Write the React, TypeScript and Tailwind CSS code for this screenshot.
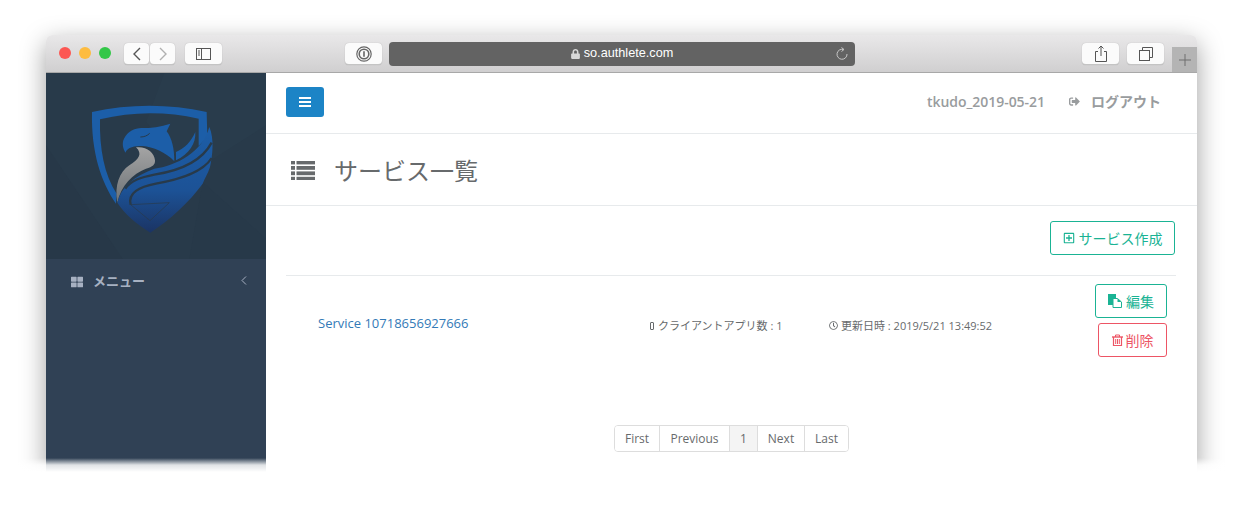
import React from 'react'
import { FaThLarge, FaSignOutAlt, FaRegPlusSquare, FaRegClock, FaLock } from 'react-icons/fa'

const font = "font-['Open_Sans','Noto_Sans_CJK_JP',sans-serif]"

function ToolButton({ className = '', children }: { className?: string; children: React.ReactNode }) {
  return (
    <div className={`h-[22px] rounded-[4px] bg-[#fbfbfb] border-b border-[#c4c4c4] shadow-[0_0_1px_rgba(0,0,0,0.25)] flex items-center justify-center ${className}`}>
      {children}
    </div>
  )
}

function TitleBar() {
  return (
    <div className="h-[38px] shrink-0 flex bg-gradient-to-b from-[#e9e8e9] to-[#d0cfd0] border-b border-[#a8a8a8] pl-[13px]">
      <div className="flex items-center gap-[8px] h-[37px] mt-[-1px]">
        <span className="w-[12px] h-[12px] rounded-full bg-[#fc5753]" />
        <span className="w-[12px] h-[12px] rounded-full bg-[#fdbc40]" />
        <span className="w-[12px] h-[12px] rounded-full bg-[#33c748]" />
      </div>
      <div className="flex items-start pt-[8px] ml-[13px]">
        <ToolButton className="w-[25px] mr-[1px]">
          <svg width="10" height="14" viewBox="0 0 10 14" fill="none" stroke="#555" strokeWidth="1.4"><path d="M8 1L2 7l6 6" /></svg>
        </ToolButton>
        <ToolButton className="w-[25px]">
          <svg width="10" height="14" viewBox="0 0 10 14" fill="none" stroke="#b0b0b0" strokeWidth="1.4"><path d="M2 1l6 6-6 6" /></svg>
        </ToolButton>
        <ToolButton className="w-[37px] ml-[10px]">
          <svg width="16" height="12" viewBox="0 0 16 12" fill="none" stroke="#555"><rect x="0.5" y="0.5" width="14" height="11" /><path d="M5.5 0.5v11M2 3h2M2 5h2M2 7h2" /></svg>
        </ToolButton>
        <ToolButton className="w-[37px] ml-[123px]">
          <svg width="16" height="16" viewBox="0 0 16 16" fill="none" stroke="#666"><circle cx="8" cy="8" r="7.2" strokeWidth="1.2" /><circle cx="8" cy="8" r="4.8" strokeWidth="1.6" /><path d="M8 5.2v5.6" strokeWidth="1.6" /></svg>
        </ToolButton>
        <div className="w-[466px] h-[24px] mt-[-1px] ml-[7px] rounded-[4px] bg-[#636363] flex items-center justify-center relative text-[12.7px] font-medium text-white font-['Liberation_Sans',sans-serif]">
          <FaLock className="w-[9px] h-[10px] text-[#d8d8d8] mr-[4px]" />
          so.authlete.com
          <svg className="absolute right-[6px] top-[5px]" width="14" height="14" viewBox="0 0 14 14" fill="none" stroke="#c8c8c8" strokeWidth="1"><path d="M8.5 2.5A5 5 0 1 0 12 7" /><path d="M6.5 0.5l2.5 2-2.5 2" /></svg>
        </div>
        <ToolButton className="w-[37px] ml-[227px]">
          <svg width="14" height="18" viewBox="0 0 14 18" fill="none" stroke="#555"><path d="M4 6.5H1.5v10h11v-10H10M7 11V1M4.5 3.5L7 1l2.5 2.5" /></svg>
        </ToolButton>
        <ToolButton className="w-[37px] ml-[8px]">
          <svg width="14" height="14" viewBox="0 0 14 14" fill="none" stroke="#555"><rect x="0.5" y="3.5" width="10" height="10" /><path d="M3.5 3.5v-3h10v10h-3" /></svg>
        </ToolButton>
      </div>
      <div className="w-[25px] h-[25px] self-end ml-[8px] bg-[#b4b4b4] flex items-center justify-center">
        <svg width="12" height="12" viewBox="0 0 12 12" stroke="#6f6f6f"><path d="M6 0v12M0 6h12" /></svg>
      </div>
    </div>
  )
}

function Logo() {
  return (
    <svg className="block w-[220px] h-[186px] bg-[#283a4a]" viewBox="0 3 660 558">
      <defs>
        <linearGradient id="shieldBlue" x1="0" y1="0" x2="0" y2="1">
          <stop offset="0" stopColor="#1c5ea8" />
          <stop offset="0.6" stopColor="#1c5296" />
          <stop offset="1" stopColor="#1b3464" />
        </linearGradient>
        <linearGradient id="neckGray" x1="0" y1="0" x2="0" y2="1">
          <stop offset="0" stopColor="#a4a4a4" />
          <stop offset="1" stopColor="#6d7276" />
        </linearGradient>
      </defs>
      <path d="M355 3L300 150L660 560H560L440 300L660 160V3Z" fill="#293c4c" />
      <path d="M0 220L230 561H0Z" fill="#273848" />
      <path d="M470 330L660 500V561H430Z" fill="#273949" />
      <path d="M138 120C250 95 370 95 482 120L484 195L458 222L458 140C360 118 260 118 162 142C160 230 175 310 212 365L210 395C165 330 135 240 138 120Z" fill="#1c5ea8" />
      <path d="M232 205C240 185 255 170 285 168C315 168 345 165 373 155L362 178C378 200 385 230 385 268C360 240 320 225 290 222C265 222 245 225 238 242C232 230 228 220 232 205Z" fill="#1c5ea8" />
      <path d="M283 195C295 195 304 191 311 184" fill="none" stroke="#283a4a" strokeWidth="3" />
      <path d="M270 226C300 222 325 240 327 265C328 278 320 285 300 290C260 305 225 340 214 392C205 340 220 300 250 280C280 262 290 245 270 226Z" fill="url(#neckGray)" />
      <path d="M390 240C415 230 435 210 448 180C450 215 430 245 390 265Z" fill="#1c5ea8" />
      <path d="M214 392C225 345 265 312 325 290C390 282 470 240 490 165C505 200 500 250 492 285C486 305 475 320 470 335C430 390 370 445 313 482C270 455 235 425 214 392Z" fill="url(#shieldBlue)" />
      <path d="M238 350C255 325 285 316 325 308C390 298 465 272 497 212" fill="none" stroke="#283a4a" strokeWidth="7" />
      <path d="M254 398C245 362 280 345 330 335C400 322 470 302 497 258" fill="none" stroke="#283a4a" strokeWidth="7" />
      <path d="M254 398L370 392L312 446Z" fill="none" stroke="#283a4a" strokeWidth="2" />
    </svg>
  )
}

function Sidebar() {
  return (
    <aside className="w-[220px] shrink-0 bg-[#304155] flex flex-col">
      <Logo />
      <div className="flex items-center h-[46px] pl-[25px] pr-[19px] text-[#a7b1c2]">
        <FaThLarge className="w-[12px] h-[12px] mr-[10px]" />
        <span className="text-[13px] font-semibold flex-1">メニュー</span>
        <svg className="mb-[3px]" width="6" height="9" viewBox="0 0 6 9" fill="none" stroke="#a7b1c2"><path d="M5 0.5L1 4.5l4 4" /></svg>
      </div>
    </aside>
  )
}

function PageLink({ label, active, className = '' }: { label: string; active?: boolean; className?: string }) {
  return (
    <span className={`h-full flex items-center justify-center border-r border-[#dddddd] last:border-r-0 ${active ? 'bg-[#f4f4f4]' : 'bg-white'} ${className}`}>
      {label}
    </span>
  )
}

function Content() {
  return (
    <main className="flex-1 bg-white flex flex-col text-[#676a6c]">
      {/* Top bar */}
      <div className="h-[61px] shrink-0 border-b border-[#e7eaec] flex items-center pl-[20px] pr-[36px]">
        <button className="w-[38px] h-[30px] mt-[-3px] rounded-[3px] bg-[#1c84c6] flex items-center justify-center">
          <svg width="12" height="10" viewBox="0 0 12 10" fill="white"><rect width="12" height="2" /><rect y="4" width="12" height="2" /><rect y="8" width="12" height="2" /></svg>
        </button>
        <div className="ml-auto flex items-center mt-[-4px] text-[14px] font-semibold text-[#999c9e]">
          <span className="w-[117px] whitespace-nowrap tracking-[-0.05px]">tkudo_2019-05-21</span>
          <FaSignOutAlt className="ml-[24px] w-[13px] h-[11px]" />
          <span className="ml-[10px]">ログアウト</span>
        </div>
      </div>

      {/* Heading */}
      <div className="h-[72px] shrink-0 border-b border-[#e7eaec] flex items-center pl-[25px]">
        <svg width="24" height="19" viewBox="0 0 24 19" fill="#676a6c" className="mt-[1px]">
          <rect width="4" height="3.4" /><rect x="5.5" width="18.5" height="3.4" />
          <rect y="5" width="4" height="3.8" /><rect x="5.5" y="5" width="18.5" height="3.8" />
          <rect y="10.4" width="4" height="3.8" /><rect x="5.5" y="10.4" width="18.5" height="3.8" />
          <rect y="15.8" width="4" height="3.2" /><rect x="5.5" y="15.8" width="18.5" height="3.2" />
        </svg>
        <h1 className="ml-[19px] mt-[3px] text-[24px] font-normal leading-none">サービス一覧</h1>
      </div>

      {/* List */}
      <div className="flex flex-col pl-[20px] pr-[21px]">
        <div className="flex justify-end pt-[15px] pr-[1px]">
          <button className="w-[125px] h-[34px] rounded-[3px] border border-[#1ab394] text-[#1ab394] text-[14px] flex items-center justify-center">
            <FaRegPlusSquare className="w-[12px] h-[12px] mr-[4px]" />
            サービス作成
          </button>
        </div>
        <div className="mt-[20px] border-t border-[#e7eaec] flex pt-[8px] pr-[9px]">
          <a className="w-[364px] pl-[32px] pt-[30px] text-[13px] text-[#337ab7]">Service 10718656927666</a>
          <div className="w-[179px] pt-[34px] flex items-start text-[11px] leading-[15px]">
            <span className="w-[4px] h-[8px] mt-[4px] mr-[4px] border border-[#676a6c] rounded-[1px]" />
            クライアントアプリ数 : 1
          </div>
          <div className="flex-1 pt-[34px] flex items-start text-[11px] leading-[15px]">
            <FaRegClock className="w-[9px] h-[9px] mt-[3px] mr-[3px]" />
            更新日時 : 2019/5/21 13:49:52
          </div>
          <div className="flex flex-col items-end gap-[5px]">
            <button className="w-[72px] h-[34px] rounded-[3px] border border-[#1ab394] text-[#1ab394] text-[14px] flex items-center justify-center">
              <svg width="14" height="14" viewBox="0 0 14 14" className="mr-[4px]">
                <rect x="0" y="0" width="8" height="11" fill="#1ab394" />
                <path d="M5 4.5h4.5L13.5 8v5.5H5Z" fill="white" stroke="#1ab394" />
                <path d="M9.5 4.5V8h4Z" fill="#1ab394" />
              </svg>
              編集
            </button>
            <button className="w-[69px] h-[34px] rounded-[3px] border border-[#ed5565] text-[#ed5565] text-[14px] flex items-center justify-center">
              <svg width="11" height="12" viewBox="0 0 11 12" fill="none" stroke="#ed5565" className="mr-[3px]">
                <path d="M0 3h11" strokeWidth="1.4" />
                <path d="M3.5 3V1h4v2" />
                <path d="M1.5 3v8.5h8V3" strokeWidth="1.2" />
                <path d="M3.7 5v5M5.5 5v5M7.3 5v5" />
              </svg>
              削除
            </button>
          </div>
        </div>
      </div>

      {/* Pagination */}
      <div className="mt-[68px] flex justify-center">
        <div className="h-[27px] w-[235px] flex border border-[#dddddd] rounded-[4px] overflow-hidden text-[12px] text-[#676a6c]">
          <PageLink label="First" className="w-[45px]" />
          <PageLink label="Previous" className="w-[70px]" />
          <PageLink label="1" active className="w-[28px]" />
          <PageLink label="Next" className="w-[47px]" />
          <PageLink label="Last" className="flex-1" />
        </div>
      </div>
    </main>
  )
}

export default function App() {
  return (
    <div className={`w-[1242px] h-[526px] bg-white overflow-hidden ${font}`}>
      <div className="relative h-[472px] overflow-hidden pt-[35px] pl-[46px]">
        <div className="w-[1151px] h-[437px] flex flex-col rounded-t-[6px] overflow-hidden shadow-[0_8px_26px_rgba(0,0,0,0.38)]">
          <TitleBar />
          <div className="flex flex-1">
            <Sidebar />
            <Content />
          </div>
        </div>
        {/* the capture fades out at the bottom */}
        <div className="absolute left-0 right-0 bottom-0 h-[14px] bg-gradient-to-b from-white/0 via-white/85 to-white" />
      </div>
    </div>
  )
}
